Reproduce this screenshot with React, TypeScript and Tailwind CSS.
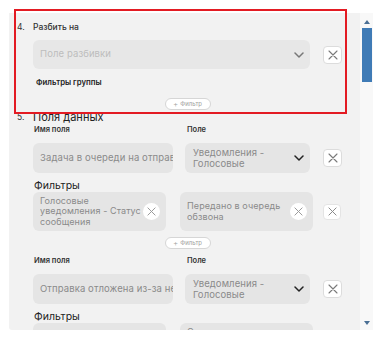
import React from "react";

const XIcon = ({ size = 10, color = "#7a7a7a", w = 1.1 }: { size?: number; color?: string; w?: number }) => (
  <svg width={size} height={size} viewBox="0 0 10 10">
    <path d="M1 1L9 9M9 1L1 9" stroke={color} strokeWidth={w} strokeLinecap="round" />
  </svg>
);

const Chevron = ({ color }: { color: string }) => (
  <svg width="10" height="6" viewBox="0 0 10 6">
    <path d="M1 1l4 4 4-4" stroke={color} strokeWidth="1.5" fill="none" strokeLinecap="round" strokeLinejoin="round" />
  </svg>
);

const XButton = ({ h = "h-[18px]" }: { h?: string }) => (
  <div className={`w-[19px] ${h} shrink-0 rounded-[4px] bg-white border border-[#dcdcdc] flex items-center justify-center`}>
    <XIcon />
  </div>
);

const AddFilter = () => (
  <div className="flex justify-center">
    <div className="w-[46px] h-[12px] rounded-full bg-white border border-[#d6d6d6] flex items-center justify-center gap-[2px] text-[6px] leading-[6px] text-[#a0a0a0]">
      <span className="text-[8px] leading-[8px] font-light">+</span>
      <span>Фильтр</span>
    </div>
  </div>
);

const Chip = ({ lines, align = "center" }: { lines: string[]; align?: "center" | "start" }) => (
  <div
    className={`w-[133px] shrink-0 self-stretch rounded-[6px] bg-[#e5e5e5] pl-[7px] pr-[6px] flex ${
      align === "center" ? "items-center" : "items-start pt-[4px]"
    }`}
  >
    <div className="flex-1 min-w-0 overflow-hidden text-[9px] leading-[10.5px] text-[#8a8a8a] tracking-[0.1px]">
      {lines.map((l, i) => (
        <div key={i} className="whitespace-nowrap">{l}</div>
      ))}
    </div>
    <div className="w-[17px] h-[17px] rounded-full bg-white flex items-center justify-center shrink-0 self-center">
      <XIcon size={9} color="#9a9a9a" w={1.1} />
    </div>
  </div>
);

const DataBlock = ({
  name,
  left,
  right,
  rightAlign = "center",
  leftAlign = "center",
  chipH = "h-[39px]",
}: {
  name: string;
  left: string[];
  right: string[];
  rightAlign?: "center" | "start";
  leftAlign?: "center" | "start";
  chipH?: string;
}) => (
  <div>
    <div className="flex h-[10px] items-center text-[7.5px] leading-[10px] font-semibold text-[#333]">
      <div className="w-[154px] pl-[1px]">Имя поля</div>
      <div>Поле</div>
    </div>
    <div className="mt-[8px] flex items-center">
      <div className="w-[140px] h-[30px] rounded-[6px] bg-[#e5e5e5] pl-[7px] flex items-center overflow-hidden">
        <span className="whitespace-nowrap text-[9.5px] text-[#8a8a8a] tracking-[0.1px]">{name}</span>
      </div>
      <div className="ml-[12px] w-[125px] h-[30px] rounded-[6px] bg-[#e5e5e5] pl-[8px] pr-[6px] flex items-center justify-between">
        <div className="text-[9.5px] leading-[11px] text-[#8a8a8a] tracking-[0.1px]">
          <div>Уведомления -</div>
          <div>Голосовые</div>
        </div>
        <Chevron color="#222" />
      </div>
      <div className="ml-[13px]">
        <XButton />
      </div>
    </div>
    <div className="mt-[7px] h-[12px] leading-[12px] text-[10.5px] text-[#222] pl-[1px]">Фильтры</div>
    <div className={`flex items-center ${chipH}`}>
      <Chip lines={left} align={leftAlign} />
      <div className="ml-[14px] flex self-stretch">
        <Chip lines={right} align={rightAlign} />
      </div>
      <div className="ml-[10px] w-[18px] h-[16px] rounded-[4px] bg-white border border-[#e4e4e4] flex items-center justify-center">
        <XIcon size={9} color="#8a8a8a" />
      </div>
    </div>
  </div>
);

export default function App() {
  return (
    <div className="relative w-[392px] h-[363px] bg-white font-['Inter',sans-serif] overflow-hidden">
      <div className="pt-[13px] pl-[9px] flex">
        <div className="w-[351px] h-[317px] bg-[#f2f2f2] overflow-hidden pl-[8px] rounded-bl-[3px]">
          {/* Section 4 */}
          <div className="flex">
            <div className="w-[16px] pt-[8px] text-[8.5px] leading-[12px] text-[#333]">4.</div>
            <div className="w-[309px]">
              <div className="mt-[8px] h-[12px] leading-[12px] text-[8.5px] font-medium text-[#333]">Разбить на</div>
              <div className="mt-[7px] flex items-center gap-[13px]">
                <div className="w-[277px] h-[29px] rounded-[6px] bg-[#e7e7e7] pl-[7px] pr-[6px] flex items-center justify-between">
                  <span className="text-[9.5px] text-[#bdbdbd] tracking-[0.1px]">Поле разбивки</span>
                  <Chevron color="#777" />
                </div>
                <XButton />
              </div>
              <div className="mt-[7px] ml-[3px] h-[12px] leading-[12px] text-[7.8px] font-semibold text-[#222]">
                Фильтры группы
              </div>
              <div className="mt-[10px]">
                <AddFilter />
              </div>
            </div>
          </div>
          {/* Section 5 */}
          <div className="flex h-[14px] items-center">
            <div className="w-[16px] text-[8.5px] text-[#333]">5.</div>
            <div className="text-[11px] leading-[14px] text-[#222]">Поля данных</div>
          </div>
          <div className="pl-[16px] w-[325px]">
            <div className="mt-[1px]">
              <DataBlock
                name="Задача в очереди на отправку"
                left={["Голосовые", "уведомления - Статус", "сообщения"]}
                right={["Передано в очередь", "обзвона"]}
              />
            </div>
            <div className="mt-[6px]">
              <AddFilter />
            </div>
            <div className="mt-[7px]">
              <DataBlock
                name="Отправка отложена из-за недоступности"
                left={["Статус"]}
                right={["Отправка голосового", "уведомления", "отложена"]}
                chipH="h-[50px]"
                rightAlign="start"
              />
            </div>
          </div>
        </div>
        {/* Scrollbar */}
        <div className="w-[13px] h-[317px] bg-[#f8f8f8] flex flex-col items-center">
          <div className="pt-[7px]">
            <svg width="6" height="4" viewBox="0 0 6 4">
              <path d="M3 0L6 4H0z" fill="#4a6f94" />
            </svg>
          </div>
          <div className="mt-[4px] w-[10px] h-[54px] bg-[#3f7bb6]" />
          <div className="flex-1" />
          <div className="mb-[5px]">
            <svg width="6" height="4" viewBox="0 0 6 4">
              <path d="M0 0H6L3 4z" fill="#4a6f94" />
            </svg>
          </div>
        </div>
      </div>
      <div className="absolute left-[14px] top-[9px] w-[333px] h-[105px] border-2 border-[#e31b23] pointer-events-none" />
    </div>
  );
}
